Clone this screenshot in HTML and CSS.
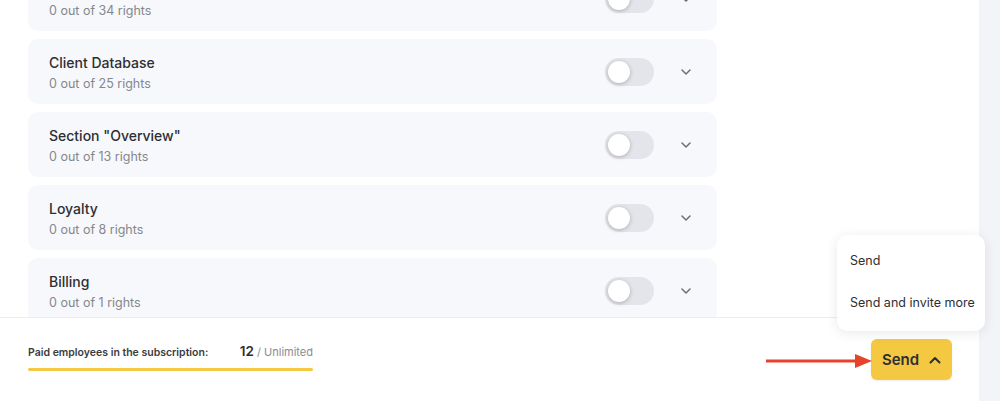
FILE: index.html
```html
<!DOCTYPE html>
<html lang="en">
<head>
    <meta charset="UTF-8">
    <title>Access rights</title>
    <link rel="stylesheet" href="styles.css">
</head>
<body>
<div class="page">
    <div class="main">
        <div class="list-view">
            <ul class="rights-list">
                <li class="right-card">
                    <div class="right-info">
                        <div class="right-title">Marketing</div>
                        <div class="right-count">0 out of 34 rights</div>
                    </div>
                    <span class="toggle"><span class="knob"></span></span>
                    <svg class="chevron" width="10" height="6" viewBox="0 0 10 6"><path d="M1 1l4 4 4-4" fill="none" stroke="#6b6e75" stroke-width="1.5" stroke-linecap="round" stroke-linejoin="round"/></svg>
                </li>
                <li class="right-card">
                    <div class="right-info">
                        <div class="right-title">Client Database</div>
                        <div class="right-count">0 out of 25 rights</div>
                    </div>
                    <span class="toggle"><span class="knob"></span></span>
                    <svg class="chevron" width="10" height="6" viewBox="0 0 10 6"><path d="M1 1l4 4 4-4" fill="none" stroke="#6b6e75" stroke-width="1.5" stroke-linecap="round" stroke-linejoin="round"/></svg>
                </li>
                <li class="right-card">
                    <div class="right-info">
                        <div class="right-title">Section "Overview"</div>
                        <div class="right-count">0 out of 13 rights</div>
                    </div>
                    <span class="toggle"><span class="knob"></span></span>
                    <svg class="chevron" width="10" height="6" viewBox="0 0 10 6"><path d="M1 1l4 4 4-4" fill="none" stroke="#6b6e75" stroke-width="1.5" stroke-linecap="round" stroke-linejoin="round"/></svg>
                </li>
                <li class="right-card">
                    <div class="right-info">
                        <div class="right-title">Loyalty</div>
                        <div class="right-count">0 out of 8 rights</div>
                    </div>
                    <span class="toggle"><span class="knob"></span></span>
                    <svg class="chevron" width="10" height="6" viewBox="0 0 10 6"><path d="M1 1l4 4 4-4" fill="none" stroke="#6b6e75" stroke-width="1.5" stroke-linecap="round" stroke-linejoin="round"/></svg>
                </li>
                <li class="right-card">
                    <div class="right-info">
                        <div class="right-title">Billing</div>
                        <div class="right-count">0 out of 1 rights</div>
                    </div>
                    <span class="toggle"><span class="knob"></span></span>
                    <svg class="chevron" width="10" height="6" viewBox="0 0 10 6"><path d="M1 1l4 4 4-4" fill="none" stroke="#6b6e75" stroke-width="1.5" stroke-linecap="round" stroke-linejoin="round"/></svg>
                </li>
            </ul>
        </div>

        <div class="footer">
            <div class="limit">
                <div class="limit-row">
                    <span class="limit-label">Paid employees in the subscription:</span>
                    <span class="limit-value"><b>12</b> / Unlimited</span>
                </div>
                <div class="limit-bar"></div>
            </div>

            <div class="send-wrap">
                <ul class="send-menu">
                    <li>Send</li>
                    <li>Send and invite more</li>
                </ul>
                <svg class="pointer" width="106" height="14" viewBox="0 0 106 14">
                    <path d="M0 7H92" stroke="#e5432b" stroke-width="3"/>
                    <path d="M89 0L106 7L89 14Z" fill="#e5432b"/>
                </svg>
                <button class="send-btn">Send
                    <svg width="12" height="8" viewBox="0 0 12 8"><path d="M1.5 6.5L6 2l4.5 4.5" fill="none" stroke="#2d2f33" stroke-width="2" stroke-linecap="round" stroke-linejoin="round"/></svg>
                </button>
            </div>
        </div>
    </div>
    <div class="side"></div>
</div>
</body>
</html>
```

FILE: styles.css
```css
* {
    margin: 0;
    padding: 0;
    box-sizing: border-box;
}

ul {
    list-style: none;
}

body {
    font-family: Inter, "Noto Sans", sans-serif;
    color: #2d2f33;
    background: #fff;
}

.page {
    display: flex;
    height: 401px;
    overflow: hidden;
}

.main {
    flex: 1;
    display: flex;
    flex-direction: column;
}

.side {
    width: 21px;
    background: #f3f4f8;
}

.list-view {
    height: 317px;
    overflow: hidden;
    padding: 0 262px 0 28px;
}

.rights-list {
    margin-top: -34px;
    display: flex;
    flex-direction: column;
    gap: 8px;
}

.right-card {
    height: 65px;
    background: #f7f8fb;
    border-radius: 10px;
    display: flex;
    align-items: center;
    padding: 0 26px 0 21px;
}

.right-info {
    flex: 1;
    padding-top: 3px;
}

.right-title {
    font-size: 14px;
    font-weight: 500;
    line-height: 20px;
    color: #2d2f33;
}

.right-count {
    margin-top: 2px;
    font-size: 12.5px;
    line-height: 18px;
    color: #85878c;
}

.toggle {
    width: 49px;
    height: 28px;
    border-radius: 14px;
    background: #e4e5ea;
    padding: 3px;
    margin-right: 27px;
}

.knob {
    display: block;
    width: 22px;
    height: 22px;
    border-radius: 50%;
    background: #fff;
    box-shadow: 0 1px 4px rgba(0, 0, 0, 0.25);
}

.footer {
    flex: 1;
    border-top: 1px solid #ecedf0;
    display: flex;
    align-items: center;
    justify-content: space-between;
    padding: 0 27px 0 28px;
}

.limit {
    width: 285px;
    padding-bottom: 5px;
}

.limit-row {
    display: flex;
    justify-content: space-between;
    align-items: baseline;
}

.limit-label {
    font-size: 10.5px;
    font-weight: 600;
    color: #3a3c40;
}

.limit-value {
    font-size: 11px;
    color: #8a8c91;
}

.limit-value b {
    font-size: 13.5px;
    font-weight: 600;
    color: #2d2f33;
}

.limit-bar {
    height: 3px;
    border-radius: 2px;
    background: #f5c842;
    margin-top: 9px;
}

.send-wrap {
    position: relative;
}

.send-btn {
    width: 81px;
    height: 41px;
    border: none;
    border-radius: 6px;
    background: #f5c842;
    font-family: Inter, "Noto Sans", sans-serif;
    font-size: 15px;
    font-weight: 600;
    color: #2d2f33;
    display: flex;
    align-items: center;
    justify-content: center;
    gap: 10px;
    box-shadow: 0 1px 2px rgba(0, 0, 0, 0.08);
}

.send-menu {
    position: absolute;
    right: -33px;
    bottom: 49px;
    width: 148px;
    padding: 5px 0 7px;
    background: #fff;
    border-radius: 10px;
    box-shadow: 0 2px 12px rgba(30, 35, 60, 0.1);
    font-size: 12.5px;
    color: #2d2f33;
}

.send-menu li {
    height: 42px;
    line-height: 42px;
    padding-left: 13px;
}

.pointer {
    position: absolute;
    right: 80px;
    top: 15px;
}
```
